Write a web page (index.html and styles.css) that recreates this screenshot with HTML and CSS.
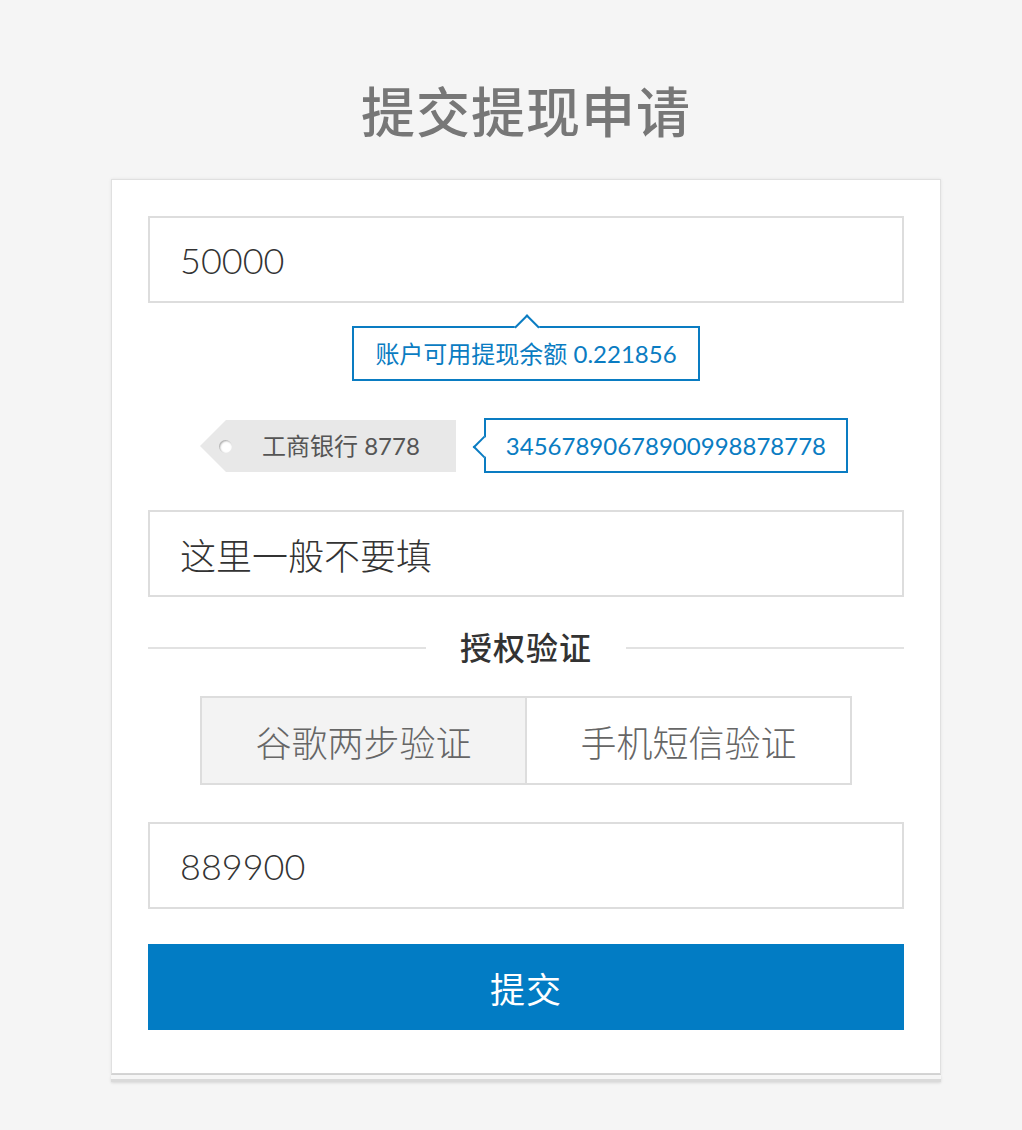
FILE: index.html
```html
<!DOCTYPE html>
<html lang="zh-CN">
<head>
<meta charset="utf-8">
<title>提交提现申请</title>
<link rel="stylesheet" href="styles.css">
</head>
<body>
<div class="page">
  <h1 class="title">提交提现申请</h1>
  <div class="card">
    <input class="field num" type="text" value="50000">
    <div class="hint-row">
      <div class="hint">账户可用提现余额 0.221856</div>
    </div>
    <div class="bank-row">
      <div class="tag">工商银行 8778</div>
      <div class="acct">34567890678900998878778</div>
    </div>
    <input class="field" type="text" value="这里一般不要填">
    <div class="divider"><span class="divider-text">授权验证</span></div>
    <div class="tabs">
      <div class="tab active">谷歌两步验证</div>
      <div class="tab">手机短信验证</div>
    </div>
    <input class="field num" type="text" value="889900">
    <button class="submit" type="button">提交</button>
  </div>
  <div class="sheet"></div>
</div>
</body>
</html>
```

FILE: styles.css
```css
* { box-sizing: border-box; }

html, body {
  margin: 0;
  padding: 0;
  background: #f5f5f5;
}

body {
  font-family: "Lato", "Noto Sans CJK SC", sans-serif;
  color: #333;
}

.page {
  width: 830px;
  margin-left: 111px;
  padding-top: 80px;
  padding-bottom: 40px;
}

.title {
  margin: 0 0 34px 0;
  text-align: center;
  font-size: 54px;
  line-height: 65px;
  font-weight: 500;
  color: #777;
  letter-spacing: 1px;
}

.card {
  display: flex;
  flex-direction: column;
  background: #fff;
  border: 1px solid #e0e0e0;
  border-bottom: 2px solid #d6d6d6;
  padding: 36px 36px 43px 36px;
  box-shadow: 0 0 3px rgba(0, 0, 0, 0.08);
}

.sheet {
  height: 7px;
  background: #f6f6f6;
  border-top: 0;
  border-bottom: 3px solid #dadada;
  box-shadow: 0 1px 3px rgba(0, 0, 0, 0.12);
}

.field {
  display: block;
  width: 100%;
  height: 87px;
  border: 2px solid #ddd;
  background: #fff;
  padding: 0 30px;
  font-family: "Lato", "Noto Sans CJK SC", sans-serif;
  font-size: 36px;
  font-weight: 300;
  color: #333;
  outline: none;
  margin: 0;
}

.hint-row {
  display: flex;
  justify-content: center;
  margin-top: 23px;
}

.hint {
  position: relative;
  height: 55px;
  border: 2px solid #0a7cc2;
  background: #fff;
  padding: 0 21px;
  font-size: 24px;
  line-height: 51px;
  color: #0a7cc2;
}

.hint::before {
  content: "";
  position: absolute;
  top: -10px;
  left: 50%;
  width: 16px;
  height: 16px;
  margin-left: -8px;
  background: #fff;
  border-top: 2px solid #0a7cc2;
  border-left: 2px solid #0a7cc2;
  transform: rotate(45deg);
}

.bank-row {
  display: flex;
  align-items: center;
  height: 55px;
  margin-top: 37px;
  padding-left: 52px;
}

.tag {
  position: relative;
  height: 52px;
  margin-left: 26px;
  padding: 0 36px;
  background: #e8e8e8;
  font-size: 24px;
  line-height: 52px;
  color: #555;
}

.tag::before {
  content: "";
  position: absolute;
  left: -26px;
  top: 0;
  width: 0;
  height: 0;
  border-top: 26px solid transparent;
  border-bottom: 26px solid transparent;
  border-right: 26px solid #e8e8e8;
}

.tag::after {
  content: "";
  position: absolute;
  left: -7px;
  top: 50%;
  width: 13px;
  height: 13px;
  margin-top: -6px;
  border-radius: 50%;
  background: #fff;
  box-shadow: inset 1px 1px 2px rgba(0, 0, 0, 0.35);
}

.acct {
  position: relative;
  height: 55px;
  margin-left: 28px;
  padding: 0 20px;
  border: 2px solid #0a7cc2;
  background: #fff;
  font-size: 24px;
  line-height: 51px;
  color: #0a7cc2;
}

.acct::before {
  content: "";
  position: absolute;
  left: -10px;
  top: 50%;
  width: 14px;
  height: 14px;
  margin-top: -7px;
  background: #fff;
  border-left: 2px solid #0a7cc2;
  border-bottom: 2px solid #0a7cc2;
  transform: rotate(45deg);
}

.bank-row + .field {
  margin-top: 37px;
}

.divider {
  display: flex;
  align-items: center;
  gap: 34px;
  height: 46px;
  margin-top: 28px;
}

.divider::before,
.divider::after {
  content: "";
  flex: 1;
  height: 2px;
  background: #e2e2e2;
}

.divider-text {
  font-size: 32px;
  line-height: 46px;
  font-weight: 500;
  color: #333;
  letter-spacing: 1px;
}

.tabs {
  display: flex;
  width: 652px;
  height: 89px;
  margin: 25px auto 0 auto;
  border: 2px solid #ddd;
}

.tab {
  flex: 1;
  display: flex;
  align-items: center;
  justify-content: center;
  font-size: 36px;
  font-weight: 300;
  color: #666;
  background: #fff;
}

.tab + .tab {
  border-left: 2px solid #ddd;
}

.tab.active {
  background: #f3f3f3;
}

.tabs + .field {
  margin-top: 37px;
}

.submit {
  display: block;
  width: 100%;
  height: 86px;
  margin-top: 35px;
  border: none;
  background: #027cc4;
  color: #fff;
  font-family: "Lato", "Noto Sans CJK SC", sans-serif;
  font-size: 35px;
  letter-spacing: 1px;
  cursor: pointer;
}
```
